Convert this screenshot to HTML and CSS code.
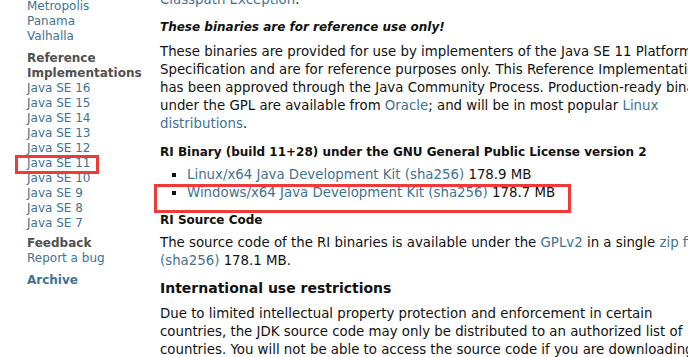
FILE: index.html
```html
<!DOCTYPE html>
<html lang="en">
<head>
    <meta charset="UTF-8">
    <meta name="viewport" content="width=device-width, initial-scale=1.0">
    <title>Java SE 11 Reference Implementations</title>
    <link rel="stylesheet" href="styles.css">
</head>
<body>
    <div class="page">
        <!-- Sidebar -->
        <nav class="sidebar">
            <div class="group">
                <a href="#">Metropolis</a>
                <a href="#">Panama</a>
                <a href="#">Valhalla</a>
            </div>
            <div class="group">
                <div class="header">Reference Implementations</div>
                <a href="#">Java SE 16</a>
                <a href="#">Java SE 15</a>
                <a href="#">Java SE 14</a>
                <a href="#">Java SE 13</a>
                <a href="#">Java SE 12</a>
                <a href="#" class="marked">Java SE 11</a>
                <a href="#">Java SE 10</a>
                <a href="#">Java SE 9</a>
                <a href="#">Java SE 8</a>
                <a href="#">Java SE 7</a>
            </div>
            <div class="group feedback">
                <div class="header">Feedback</div>
                <a href="#">Report a bug</a>
            </div>
            <div class="group">
                <a href="#" class="archive">Archive</a>
            </div>
        </nav>

        <!-- Main content -->
        <main class="content">
            <p class="top"><a href="#">Classpath Exception</a>.</p>
            <p class="warning">These binaries are for reference use only!</p>
            <p class="intro">These binaries are provided for use by implementers of the Java SE 11 Platform Specification and are for reference purposes only. This Reference Implementation has been approved through the Java Community Process. Production-ready binaries under the GPL are available from <a href="#">Oracle</a>; and will be in most popular <a href="#">Linux distributions</a>.</p>

            <h4>RI Binary (build 11+28) under the GNU General Public License version 2</h4>
            <ul class="downloads">
                <li><a href="#">Linux/x64 Java Development Kit</a> <a href="#">(sha256)</a> 178.9 MB</li>
                <li class="marked"><a href="#">Windows/x64 Java Development Kit</a> <a href="#">(sha256)</a> 178.7 MB</li>
            </ul>

            <h4>RI Source Code</h4>
            <p>The source code of the RI binaries is available under the <a href="#">GPLv2</a> in a single <a href="#">zip file</a> <a href="#">(sha256)</a> 178.1 MB.</p>

            <h3>International use restrictions</h3>
            <p>Due to limited intellectual property protection and enforcement in certain countries, the JDK source code may only be distributed to an authorized list of countries. You will not be able to access the source code if you are downloading from a country that is not on this list.</p>
        </main>
    </div>
</body>
</html>
```

FILE: styles.css
```css
html, body {
    overflow: hidden;
}

body {
    margin: 0;
    font-family: "DejaVu Sans", Verdana, sans-serif;
    background-color: #fff;
    color: #111;
}

a {
    color: #437291;
    text-decoration: none;
}

.page {
    display: flex;
}

/* Sidebar */
.sidebar {
    flex-shrink: 0;
    width: 133px;
    padding-left: 27px;
    margin-top: -1px;
    font-size: 12px;
    line-height: 15px;
}

.sidebar a {
    display: block;
}

.group + .group {
    margin-top: 7px;
}

.group.feedback {
    margin-top: 5px;
}

.header {
    font-weight: bold;
    color: #505050;
}

.sidebar .archive {
    font-weight: bold;
}

/* red annotation boxes */
.marked {
    position: relative;
}

.sidebar .marked::after {
    content: "";
    position: absolute;
    left: -12px;
    top: -1px;
    width: 84px;
    height: 19px;
    border: 3px solid #ef3a3a;
    box-sizing: border-box;
}

.downloads .marked::after {
    content: "";
    position: absolute;
    left: -18px;
    top: 0;
    width: 417px;
    height: 29px;
    border: 3px solid #ef3a3a;
    box-sizing: border-box;
}

/* Main content */
.content {
    flex-shrink: 0;
    width: 555px;
    margin-top: -9px;
    font-size: 13.33px;
    line-height: 18px;
}

.content p {
    margin: 0 0 9px;
}

.content .warning {
    font-size: 12px;
    font-weight: bold;
    font-style: italic;
    margin-bottom: 7px;
}

.content .intro {
    margin-right: -11px;
    margin-bottom: 10px;
}

h4 {
    font-size: 12px;
    line-height: 18px;
    margin: 0 0 5px;
}

h3 {
    font-size: 14px;
    line-height: 18px;
    margin: 8px 0 8px;
}

.downloads {
    list-style: none;
    margin: 0 0 9px;
    padding-left: 12px;
}

.downloads li::before {
    content: "";
    display: inline-block;
    width: 4px;
    height: 4px;
    margin: 0 11px 2px 0;
    background-color: #111;
}
```
